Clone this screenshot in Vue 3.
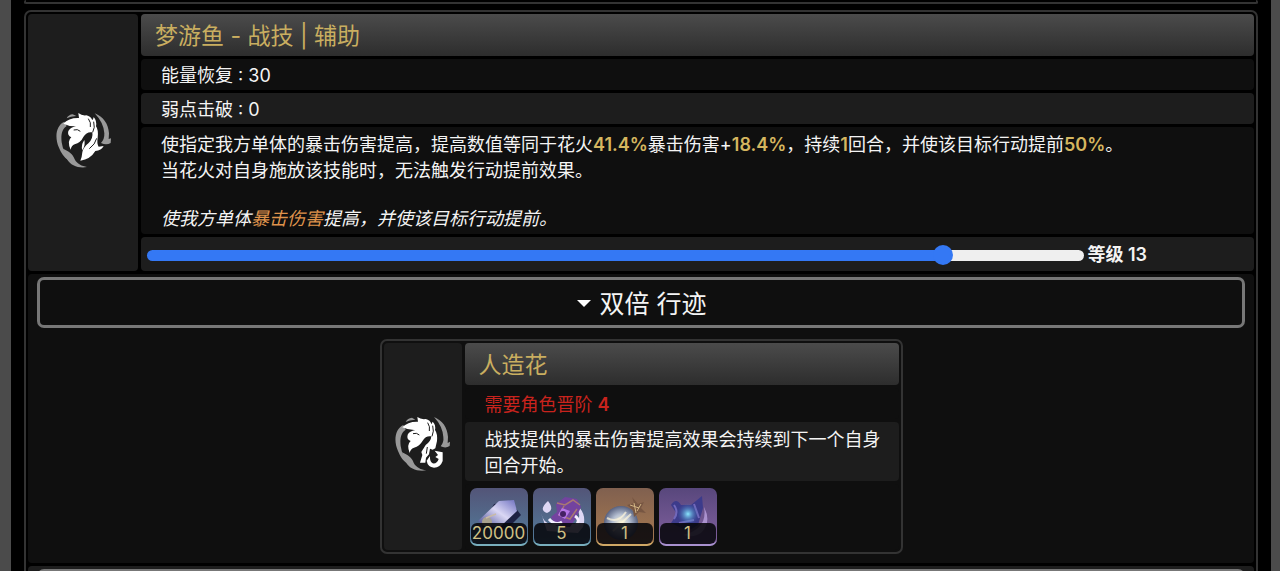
<template>
    <main class="page">
        <section class="card previous"></section>
        <section class="card skill">
            <div class="cell icon-cell">
                <svg class="skill-icon" viewBox="45 35 171 171" aria-hidden="true">
                    <path class="ring" d="M80 54 Q86 43 98 42 L109 47 Q91 48 80 54Z" />
                    <path class="ring" d="M73 64 C48 75 43 111 57 142 C63 157 72 171 84 179 C77 163 68 147 65 126 C62 102 67 85 80 77Z" />
                    <path class="ring" d="M69 145 C86 152 99 161 104 177 C111 191 126 198 141 200 C116 205 91 194 82 178 C75 167 70 157 69 145Z" />
                    <path class="ring" d="M164 39 C190 50 205 69 207 99 L206 116 L213 114 L212 128 Q199 136 183 128 Q194 116 193 99 Q191 67 164 39Z" />
                    <path class="petal" d="M70 70 Q86 52 117 53 L115 38 Q126 47 139 45 Q153 48 157 60 Q162 51 161 50 Q171 61 168 78 Q176 89 173 112 Q170 129 176 139 L191 137 Q184 151 166 152 Q151 177 121 181 Q126 170 127 156 Q130 140 146 128 Q160 114 157 96 Q140 93 130 110 Q122 127 104 132 Q94 136 92 148 Q80 122 94 111 Q81 105 85 92 Q90 82 108 78 Q89 79 70 70Z" />
                    <path class="petal" d="M133 119 Q137 133 127 150 Q122 135 133 119Z" />
                    <path class="crease" d="M145 55 Q154 67 151 80 M161 64 Q166 82 158 96 M101 89 Q113 85 121 93 M170 114 Q166 132 148 145" />
                </svg>
            </div>
            <div class="rows">
                <h2 class="cell title">梦游鱼 - 战技 | 辅助</h2>
                <div class="cell row dark">能量恢复 : 30</div>
                <div class="cell row">弱点击破 : 0</div>
                <div class="cell text dark">
                    <p>使指定我方单体的暴击伤害提高，提高数值等同于花火<b>41.4%</b>暴击伤害+<b>18.4%</b>，持续<b>1</b>回合，并使该目标行动提前<b>50%</b>。</p>
                    <p>当花火对自身施放该技能时，无法触发行动提前效果。</p>
                    <p class="summary">使我方单体<em>暴击伤害</em>提高，并使该目标行动提前。</p>
                </div>
                <div class="cell level">
                    <input id="level" v-model.number="level" type="range" min="1" max="15" :style="{ '--fill': fill }">
                    <label for="level">等级 {{ level }}</label>
                </div>
            </div>

            <div class="cell traces dark">
                <button type="button" class="toggle" :aria-expanded="isOpen" @click="toggle">
                    <svg class="caret" viewBox="0 0 14 8" aria-hidden="true"><path d="M0 0h14L7 7z" /></svg>
                    双倍 行迹
                </button>
                <article v-if="isOpen" class="card trace">
                    <div class="cell icon-cell">
                        <svg class="skill-icon" viewBox="42 49 171 171" aria-hidden="true">
                            <path class="ring" d="M77 67 Q83 55 96 54 L106 60 Q88 61 77 67Z" />
                            <path class="ring" d="M70 76 C45 88 40 123 54 154 C60 169 69 184 81 191 C74 176 65 160 62 139 C59 115 64 98 77 90Z" />
                            <path class="ring" d="M66 158 C83 165 96 174 101 189 C108 203 123 210 139 212 C113 217 88 206 79 190 C72 179 67 170 66 158Z" />
                            <path class="ring" d="M162 52 C187 63 202 82 204 112 L203 130 L210 126 L209 139 Q197 147 182 140 Q192 128 190 112 Q188 80 162 52Z" />
                            <path class="petal" d="M67 83 Q83 65 114 66 L112 52 Q123 60 137 58 Q151 61 154 74 L158 66 Q168 75 165 91 Q173 102 171 124 L166 146 L158 150 L150 147 L147 164 L138 174 L136 189 L120 189 L127 166 L124 157 L137 136 Q153 125 154 110 Q138 107 128 123 Q119 139 102 144 Q91 148 89 160 Q79 135 92 124 Q79 119 83 105 Q88 95 106 91 Q86 92 67 83Z" />
                            <path class="petal" d="M164 153 L188 158 L188 184 Q181 204 162 204 Q143 202 140 183 L150 169 Q149 186 158 191 Q171 193 176 178 L166 172 L174 166Z" />
                            <path class="crease" d="M143 69 Q151 81 148 94 M158 78 Q163 95 156 110 M99 102 Q110 98 118 106 M142 142 L139 162" />
                        </svg>
                    </div>
                    <div class="rows">
                        <h3 class="cell title">人造花</h3>
                        <div class="cell row dark required">需要角色晋阶 <b>4</b></div>
                        <div class="cell text">
                            <p>战技提供的暴击伤害提高效果会持续到下一个自身回合开始。</p>
                        </div>
                        <ul class="cell materials dark">
                            <li v-for="item in materials" :key="item.kind" class="material" :class="item.kind">
                                <svg v-if="item.kind === 'credit'" viewBox="0 0 58 58" aria-hidden="true">
                                    <defs>
                                        <linearGradient id="creditFace" x1="0" y1="1" x2="1" y2="0">
                                            <stop offset="0" stop-color="#393d88" />
                                            <stop offset=".55" stop-color="#dad7f4" />
                                            <stop offset="1" stop-color="#6d70c0" />
                                        </linearGradient>
                                    </defs>
                                    <path d="M24 16 41 14 51 27 35 43 12 39Z" fill="#1d2143" />
                                    <path d="M8 33 29 13 44 12 47 23 29 40 15 38Z" fill="url(#creditFace)" />
                                    <circle cx="17" cy="34" r="5" fill="#a8a18e" />
                                    <path d="M16 30 26 26" stroke="#c8baa7" stroke-width="1.5" />
                                </svg>
                                <svg v-else-if="item.kind === 'mask'" viewBox="0 0 58 58" aria-hidden="true">
                                    <path d="M15 13 Q5 22 14 25 Q22 22 15 13Z M8 25 Q12 40 24 35 L43 36 Q49 28 44 22 L45 18 Q54 27 50 39 L45 45 14 43Z" fill="#ded7f4" />
                                    <path d="M23 16 32 9 44 11 48 19 43 30 37 39 23 38 18 29 24 24Z" fill="#73439f" />
                                    <path d="M24 15 32 17 40 12 47 17 M31 18 26 27 37 31 44 21" fill="none" stroke="#a87872" stroke-width="1.5" />
                                    <path d="M29 20 37 23 32 31 25 27Z" fill="#b575e6" />
                                    <circle cx="30" cy="26" r="3" fill="#452163" />
                                    <path d="M16 31 Q22 38 29 34 M42 28 Q48 32 43 37" fill="none" stroke="#f6efff" stroke-width="3" />
                                </svg>
                                <svg v-else-if="item.kind === 'orb'" viewBox="0 0 58 58" aria-hidden="true">
                                    <defs>
                                        <radialGradient id="orbFace">
                                            <stop offset="0" stop-color="#fff8d9" />
                                            <stop offset=".5" stop-color="#b5bfd1" />
                                            <stop offset="1" stop-color="#576180" />
                                        </radialGradient>
                                    </defs>
                                    <circle cx="25" cy="35" r="17" fill="url(#orbFace)" />
                                    <path d="M11 30 Q22 36 30 24 M17 43 35 26" fill="none" stroke="#fff6dc" stroke-width="2" opacity=".7" />
                                    <path d="M31 17 38 15 36 9 42 16 48 14 45 20 50 25 43 24 38 29 37 22Z" fill="#775642" />
                                    <path d="M34 17 43 20 M38 15 40 25 M45 16 41 23" stroke="#d2b584" stroke-width="1" />
                                </svg>
                                <svg v-else viewBox="0 0 58 58" aria-hidden="true">
                                    <defs>
                                        <radialGradient id="starGlow">
                                            <stop offset="0" stop-color="#8be8ff" />
                                            <stop offset="1" stop-color="#3464b1" stop-opacity="0" />
                                        </radialGradient>
                                    </defs>
                                    <path d="M45 19 Q53 34 42 45 Q35 50 24 47 Q49 41 45 19Z" fill="#aa91ce" />
                                    <path d="M12 17 Q17 9 22 17 L32 17 43 8 44 20 39 37 29 43 12 35 18 26Z" fill="#3c3b8b" />
                                    <path d="M15 17 Q20 24 15 31 M35 16 40 30 M20 35 35 32" fill="none" stroke="#7168ba" stroke-width="2" />
                                    <circle cx="29" cy="26" r="11" fill="url(#starGlow)" />
                                </svg>
                                <span class="count">{{ item.count }}</span>
                            </li>
                        </ul>
                    </div>
                </article>
            </div>
            <div class="cell traces">
                <button type="button" class="toggle" aria-label="行迹"></button>
            </div>
        </section>
    </main>
</template>

<script setup>
import { computed, ref } from 'vue';

const level = ref(13);
const isOpen = ref(true);

const fill = computed(() => `${((level.value - 1) / 14) * 100}%`);

const materials = [
    { kind: 'credit', count: 20000 },
    { kind: 'mask', count: 5 },
    { kind: 'orb', count: 1 },
    { kind: 'star', count: 1 }
];

const toggle = () => {
    isOpen.value = !isOpen.value;
};
</script>

<style>
body {
    background: #000000;
}
</style>

<style scoped>
.page {
    box-sizing: border-box;
    height: 100vh;
    overflow: hidden;
    padding: 0 13px;
    border: solid #4b4b4b;
    border-width: 0 9px 0 11px;
    background: #000000;
    color: #f4f4f4;
    font-family: Inter, 'Noto Sans CJK SC', sans-serif;
    font-size: 18px;
    line-height: 26px;
}

.page * {
    box-sizing: border-box;
}

h2,
h3,
p,
ul {
    margin: 0;
    padding: 0;
}

.card {
    border: 2px solid #333333;
    border-radius: 7px;
    background: #000000;
}

.previous {
    height: 4px;
    margin-bottom: 6px;
    border-top: 0;
}

.skill {
    display: grid;
    grid-template-columns: 110px 1fr;
    gap: 3px;
    padding: 2px;
}

.cell {
    border-radius: 4px;
    background: #1d1d1d;
}

.cell.dark {
    background: #0f0f0f;
}

.icon-cell {
    display: flex;
    align-items: center;
    justify-content: center;
    padding-bottom: 4px;
}

.skill-icon {
    width: 57px;
    height: 57px;
}

.ring {
    fill: #999999;
}

.petal {
    fill: #ffffff;
}

.crease {
    fill: none;
    stroke: #1d1d1d;
    stroke-width: 3;
}

.rows {
    display: grid;
    gap: 3px;
    min-width: 0;
}

.title {
    padding: 5px 14px 3px;
    background: linear-gradient(#4b4b4b, #2d2d2d);
    color: #c9ae60;
    font-size: 23px;
    font-weight: 400;
    line-height: 34px;
}

.row {
    padding: 4px 20px 1px;
}

.text {
    padding: 5px 10px 2px 20px;
}

.text b {
    color: #d5b65f;
    font-weight: 600;
}

.summary {
    margin-top: 22px;
    font-style: italic;
}

.summary em {
    color: #df934c;
}

.level {
    display: flex;
    align-items: center;
    gap: 3px;
    height: 34px;
    padding: 2px 107px 0 6px;
    font-weight: 600;
}

.level input {
    flex: 1;
    min-width: 0;
    height: 20px;
    margin: 0;
    appearance: none;
    background: transparent;
}

.level input::-webkit-slider-runnable-track {
    height: 11px;
    border-radius: 6px;
    background: linear-gradient(to right, #3478f4 var(--fill), #efefef var(--fill));
}

.level input::-webkit-slider-thumb {
    width: 20px;
    height: 20px;
    margin-top: -5px;
    appearance: none;
    border-radius: 50%;
    background: #3478f4;
}

.traces {
    grid-column: 1 / -1;
    padding: 3px 9px 9px;
}

.toggle {
    display: flex;
    align-items: center;
    justify-content: center;
    gap: 8px;
    width: 100%;
    height: 51px;
    padding: 2px 0 0 2px;
    border: 3px solid #777777;
    border-radius: 7px;
    background: #0f0f0f;
    color: #f4f4f4;
    font: inherit;
    font-size: 25px;
    cursor: pointer;
}

.caret {
    width: 14px;
    height: 8px;
    fill: #ffffff;
}

.trace {
    display: grid;
    grid-template-columns: 78px 1fr;
    gap: 3px;
    width: 523px;
    max-width: 100%;
    margin: 11px auto 0;
    padding: 2px;
    background: #0f0f0f;
}

.required {
    color: #c8231d;
}

.required b {
    font-weight: 600;
}

.materials {
    display: flex;
    gap: 5px;
    padding: 4px 5px;
    list-style: none;
}

.material {
    position: relative;
    width: 58px;
    height: 58px;
    overflow: hidden;
    border-bottom: 2px solid #78aebd;
    border-radius: 7px;
    background: linear-gradient(#535578, #527c9b);
}

.material svg {
    display: block;
    width: 58px;
    height: 58px;
}

.material.orb {
    border-color: #d0a865;
    background: linear-gradient(#80604f, #a87a50);
}

.material.star {
    border-color: #a991cf;
    background: linear-gradient(#58477c, #82619f);
}

.count {
    position: absolute;
    right: 1px;
    bottom: 0;
    left: 1px;
    height: 21px;
    border-radius: 6px;
    background: rgba(6, 6, 10, 0.88);
    color: #d0c084;
    font-size: 17px;
    line-height: 20px;
    text-align: center;
}
</style>
